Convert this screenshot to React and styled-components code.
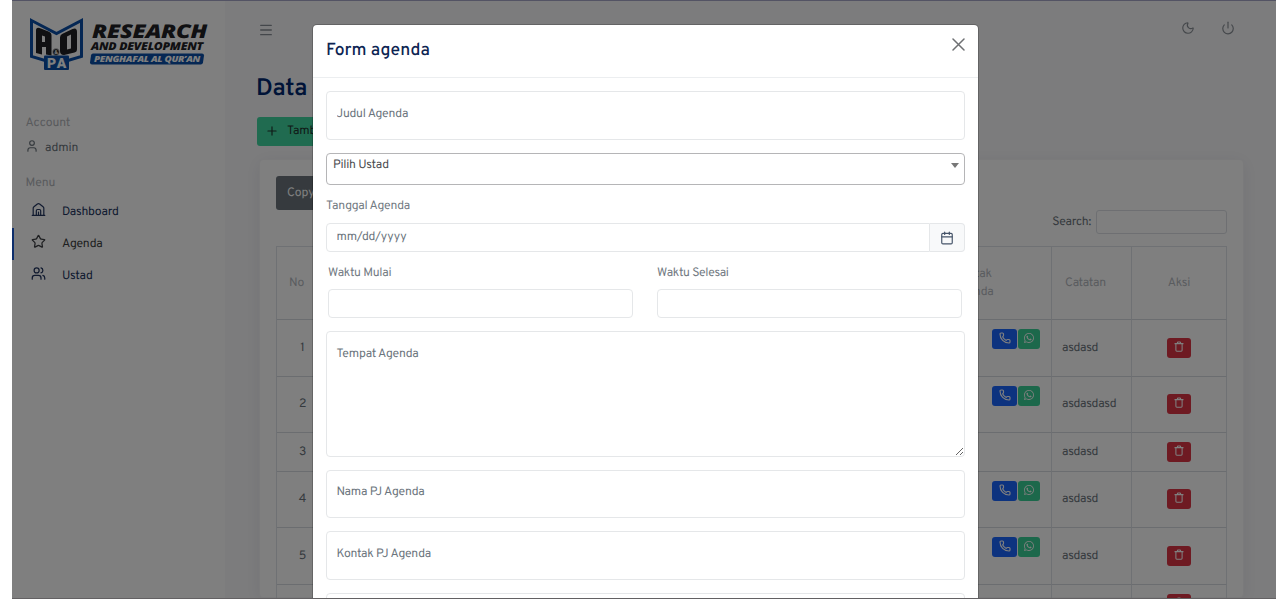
import React from "react";
import styled, { createGlobalStyle } from "styled-components";
import { Menu, Moon, Power, User, Users, Star, Calendar, Plus, Phone } from "lucide-react";
import { BsWhatsapp } from "react-icons/bs";

const Global = createGlobalStyle`
  * { box-sizing: border-box; }
  html, body { margin: 0; background: #fff; overflow: hidden; }
  body { font-family: Overpass, Roboto, "Liberation Sans", sans-serif; font-size: 12.2px; letter-spacing: -.26px; color: #6c757d; line-height: 18px; text-rendering: geometricPrecision; }
  input, textarea, button { text-rendering: geometricPrecision; }
`;
const Page = styled.div`
  position: relative; width: 1264px; height: 599px; margin: 0 12px; display: flex;
  overflow: hidden; background: #f9f9fb; border-top: 1px solid #535364; border-bottom: 1px solid #636163;
`;
const Sidebar = styled.aside`width: 213px; background: #fff; flex: none;`;
const LogoRow = styled.div`height: 106px; padding: 16px 0 0 17px;`;
const Caption = styled.div`height: 20px; padding: 7px 0 0 13.5px; color: #b3b6bb; line-height: 18px; letter-spacing: -.1px;`;
const Account = styled.div`height: 40px; padding: 12px 0 0 13px; display: flex; gap: 6px; line-height: 19px; color: #6c757d; letter-spacing: -.1px;`;
const Nav = styled.nav`padding-top: 9px;`;
const NavItem = styled.div`
  height: 32px; display: flex; align-items: center; padding-left: 17px; gap: 16px;
  border-left: 2px solid ${p => (p.$active ? "#1c5cd8" : "transparent")};
  color: ${p => (p.$active ? "#3c3e42" : "#22355f")};
  svg { margin-top: -5px; }
`;
const Main = styled.main`flex: 1; padding: 0 32px; display: flex; flex-direction: column;`;
const TopBar = styled.header`
  height: 58px; flex: none; display: flex; justify-content: space-between; align-items: center; padding: 0 9px 0 1px; color: #898f96;
  div { display: flex; gap: 26px; margin-bottom: 5px; }
`;
const Title = styled.h1`margin: 15px 0 10px -1px; flex: none; font-size: 24px; line-height: 33px; letter-spacing: 0; font-weight: 600; color: #012970;`;
const AddButton = styled.button`
  height: 29px; width: 100px; flex: none; border: 0; border-radius: 3px; background: #40d6a0; color: #20352f;
  font: inherit; letter-spacing: inherit; display: flex; align-items: center; gap: 8px; padding: 0 0 2px 8px;
`;
const Card = styled.section`
  width: 985px; margin: 13px 0 0 2px; flex: 1; min-height: 0; background: #fff; border: 1px solid #f4f4f6; border-radius: 4px;
  box-shadow: 0 3px 18px rgba(30,30,60,.08); padding: 16px 16px 0 16px;
`;
const CopyButton = styled.button`
  height: 34px; border: 0; border-radius: 3px; background: #6c757d; color: #fff; font: inherit; letter-spacing: -.1px; padding: 0 11px 1px;
`;
const Search = styled.label`display: flex; justify-content: flex-end; align-items: center; gap: 5px; color: #6c757d;`;
const SearchInput = styled.input`width: 131px; height: 24px; border: 1px solid #dcdfe4; border-radius: 3px; background: #fff;`;
const Table = styled.div`margin-top: 12px; border-top: 1px solid #dfe3e8; border-left: 1px solid #dfe3e8;`;
const Row = styled.div`
  display: grid; grid-template-columns: 52px 1fr 149px 80px 95px; height: ${p => p.$h}px;
`;
const Cell = styled.div`
  border-right: 1px solid #dfe3e8; border-bottom: 1px solid #d7dae0;
  display: flex; align-items: center; justify-content: ${p => p.$at || "flex-start"};
  padding: ${p => p.$pad || "0"}; color: ${p => (p.$head ? "#b5b9be" : "#6c757d")}; text-align: center;
  svg { display: block; }
`;
const Contacts = styled.div`align-self: flex-start; display: flex; gap: 1px; margin-top: 9px;`;
const IconButton = styled.button`
  width: ${p => p.$w}px; height: 20px; padding: 0 0 3px; border: 0; border-radius: 3px; background: ${p => p.$c}; color: #fff;
  display: grid; place-items: center;
`;
const Backdrop = styled.div`position: absolute; inset: 0; background: rgba(0,0,0,.5);`;
const Modal = styled.div`
  position: absolute; left: 301px; top: 24px; width: 665px; height: 620px; background: #fff; border-radius: 4px;
  box-shadow: 0 0 0 1px rgba(0,0,0,.2);
`;
const ModalHead = styled.div`
  height: 53px; border-bottom: 1px solid #eceef0; display: flex; justify-content: space-between; align-items: flex-start;
  padding: 15px 13px 0 13px; color: #6e7073;
  h2 { margin: 0; color: #0c2452; font-size: 17.5px; line-height: 22px; letter-spacing: .1px; font-weight: 500; }
  svg { margin-top: -2px; }
`;
const Form = styled.form`padding: 13px 13px 0; display: flex; flex-direction: column; align-items: stretch;`;
const Field = styled.input`
  height: ${p => p.$h || 49}px; border: 1px solid #e5e7e9; border-radius: ${p => (p.$grow ? "4px 0 0 4px" : "4px")}; padding: 0 10px ${p => p.$pb ?? 4}px 9.5px;
  font: inherit; letter-spacing: inherit; min-width: 0; background: #fff; flex: ${p => (p.$grow ? 1 : "none")}; margin-bottom: ${p => p.$mb || 0}px;
  outline: none; width: ${p => (p.$grow ? "auto" : "100%")};
  &::placeholder { color: #6c757d; opacity: 1; }
`;
const Select = styled.div`
  height: 32px; border: 1px solid #b5b5b7; border-radius: 4px; margin-bottom: 12px; display: flex; justify-content: space-between;
  align-items: flex-start; padding: 2px 5px 0 6px; color: #4c4d50;
  &::after { content: ""; margin-top: 7px; border: 4px solid transparent; border-top: 5px solid #777; border-bottom: 0; }
`;
const Label = styled.label`height: 18px; margin-bottom: ${p => p.$mb}px; color: #737b83;`;
const DateGroup = styled.div`display: flex; margin-bottom: 12px;`;
const DateButton = styled.div`
  width: 35px; height: 29px; border: 1px solid #e5e7e9; border-left: 0; border-radius: 0 4px 4px 0; background: #f8f9fa; color: #465469; display: grid; place-items: center;
`;
const Times = styled.div`display: grid; grid-template-columns: 1fr 1fr; gap: 24px; padding: 0 3px 0 2px; margin-bottom: 13px;`;
const TimeField = styled.div`display: flex; flex-direction: column;`;
const Area = styled.textarea`
  height: 126px; border: 1px solid #e5e7e9; border-radius: 4px; padding: 12.5px 9.5px; font: inherit; letter-spacing: inherit; margin-bottom: 13px; resize: vertical; outline: none;
  &::placeholder { color: #6c757d; opacity: 1; }
`;

const CloseIcon = () => (
  <svg width="13" height="13" viewBox="0 0 13 13" fill="none" stroke="currentColor" strokeWidth="1.500" strokeLinecap="round">
    <path d="M1 1l11 11M12 1 1 12" />
  </svg>
);
const HomeIcon = () => (
  <svg width="15" height="15" viewBox="0 0 24 24" fill="none" stroke="currentColor" strokeWidth="1.900" strokeLinejoin="round" strokeLinecap="round">
    <path d="M2 21.500h20M3.500 21.500V10q0-1.500 1.200-2.400l5.500-4.500q1.800-1.300 3.600 0l5.500 4.500q1.200.9 1.200 2.400v11.500M8.500 21.500V14a2 2 0 0 1 2-2h3a2 2 0 0 1 2 2v7.500M12 16v5" />
  </svg>
);
const TrashIcon = () => (
  <svg width="10" height="11" viewBox="0 0 20 23" fill="none" stroke="currentColor" strokeWidth="2.200" strokeLinejoin="round" strokeLinecap="round">
    <path d="M1.500 5.500h17M3.500 6v13.500a2 2 0 0 0 2 2h9a2 2 0 0 0 2-2V6M6.500 5V4a2 2 0 0 1 2-2h3a2 2 0 0 1 2 2v1" />
  </svg>
);
const Logo = () => (
  <svg width="180" height="54" viewBox="0 0 180 54">
    <path d="M2.500 3.500 27.500 16.500 52.500 3.500v36L39 43.500H16L2.500 39.500z" fill="none" stroke="#0a4fa8" strokeWidth="3" />
    <path d="M7 36V13.500q0-3.500 3.500-2.500l9 3.500q3 1 3 4v20l-5.500-1v-7.500H13v7.500zM13 18.500V25h3v-5.500z" fill="#202024" fillRule="evenodd" />
    <path d="M31 20.500q0-2.500 2-3.500l10.500-5q4.500-2 4.500 3v17q0 3-2.500 3.500l-10.500 2.500q-4 0-4-4zM38 19.500v13l4-1V17.500z" fill="#202024" fillRule="evenodd" />
    <circle cx="27" cy="35" r="3.400" fill="#202024" stroke="#ddd" strokeWidth=".8" />
    <text x="27" y="37" fontSize="5.500" fontWeight="700" fill="#fff" textAnchor="middle">&amp;</text>
    <rect x="15" y="38.500" width="25" height="14.500" rx="1" fill="#0a4fa8" />
    <text x="18" y="50.800" fontFamily="Roboto, sans-serif" fontSize="14" fontWeight="900" fill="#fff" textLength="19">PA</text>
    <g fontFamily="'Open Sans', sans-serif" fontStyle="italic" fontWeight="800" fill="#202024">
      <text x="63" y="21" fontSize="19" textLength="115" lengthAdjust="spacingAndGlyphs">RESEARCH</text>
      <text x="62" y="32.500" fontSize="11" textLength="112" lengthAdjust="spacingAndGlyphs">AND DEVELOPMENT</text>
    </g>
    <path d="M64 36.500h109q2 0 2 2l-1 7q-.3 2-2.300 2H63q-2 0-2-2l1-7q.3-2 2-2z" fill="#0a4fa8" />
    <text x="65" y="45" fontFamily="'Open Sans', sans-serif" fontStyle="italic" fontWeight="800" fontSize="8.500" textLength="106" lengthAdjust="spacingAndGlyphs" fill="#fff">PENGHAFAL AL QUR’AN</text>
  </svg>
);

const rows = [
  [1, 57, "asdasd", true], [2, 56, "asdasdasd", true], [3, 39, "asdasd", false],
  [4, 56, "asdasd", true], [5, 57, "asdasd", true], ["", 39, "", false],
];

export default function App() {
  return (
    <>
      <Global />
      <Page>
        <Sidebar>
          <LogoRow><Logo /></LogoRow>
          <Caption>Account</Caption>
          <Account><User size={14} strokeWidth={2} /><span>admin</span></Account>
          <Caption>Menu</Caption>
          <Nav>
            <NavItem><HomeIcon />Dashboard</NavItem>
            <NavItem $active><Star size={15} />Agenda</NavItem>
            <NavItem><Users size={15} />Ustad</NavItem>
          </Nav>
        </Sidebar>
        <Main>
          <TopBar><Menu size={16} strokeWidth={1.9} /><div><Moon size={14} /><Power size={14} /></div></TopBar>
          <Title>Data Agenda</Title>
          <AddButton><Plus size={14} />Tambah</AddButton>
          <Card>
            <CopyButton>Copy</CopyButton>
            <Search>Search:<SearchInput /></Search>
            <Table>
              <Row $h={73}>
                <Cell $head $pad="0 0 0 12px">No</Cell>
                <Cell $head />
                <Cell $head $pad="0 0 0 50px">Kontak<br />Agenda</Cell>
                <Cell $head $pad="0 0 0 13px">Catatan</Cell>
                <Cell $head $at="center">Aksi</Cell>
              </Row>
              {rows.map(([n, h, note, contacts], i) => (
                <Row $h={h} key={i}>
                  <Cell $at="center" $pad="0 0 1px">{n}</Cell>
                  <Cell />
                  <Cell $at="flex-end" $pad="0 11px 0 0">
                    {contacts && <Contacts>
                      <IconButton $w={25} $c="#1a66ff"><Phone size={12} strokeWidth={2.3} /></IconButton>
                      <IconButton $w={22} $c="#38d096"><BsWhatsapp size={10} /></IconButton>
                    </Contacts>}
                  </Cell>
                  <Cell $pad="0 0 1px 10px">{note}</Cell>
                  <Cell $at="center" $pad="0 0 1px"><IconButton $w={24} $c="#dc3545"><TrashIcon /></IconButton></Cell>
                </Row>
              ))}
            </Table>
          </Card>
        </Main>
        <Backdrop />
        <Modal>
          <ModalHead><h2>Form agenda</h2><CloseIcon /></ModalHead>
          <Form>
            <Field placeholder="Judul Agenda" $mb={13} />
            <Select>Pilih Ustad</Select>
            <Label $mb={8}>Tanggal Agenda</Label>
            <DateGroup><Field $grow $h={29} $pb={1} placeholder="mm/dd/yyyy" /><DateButton><Calendar size={14} strokeWidth={2} /></DateButton></DateGroup>
            <Times>
              <TimeField><Label $mb={7}>Waktu Mulai</Label><Field $h={29} /></TimeField>
              <TimeField><Label $mb={7}>Waktu Selesai</Label><Field $h={29} /></TimeField>
            </Times>
            <Area placeholder="Tempat Agenda" />
            <Field placeholder="Nama PJ Agenda" $h={48} $mb={13} />
            <Field placeholder="Kontak PJ Agenda" $mb={13} />
            <Field />
          </Form>
        </Modal>
      </Page>
    </>
  );
}
